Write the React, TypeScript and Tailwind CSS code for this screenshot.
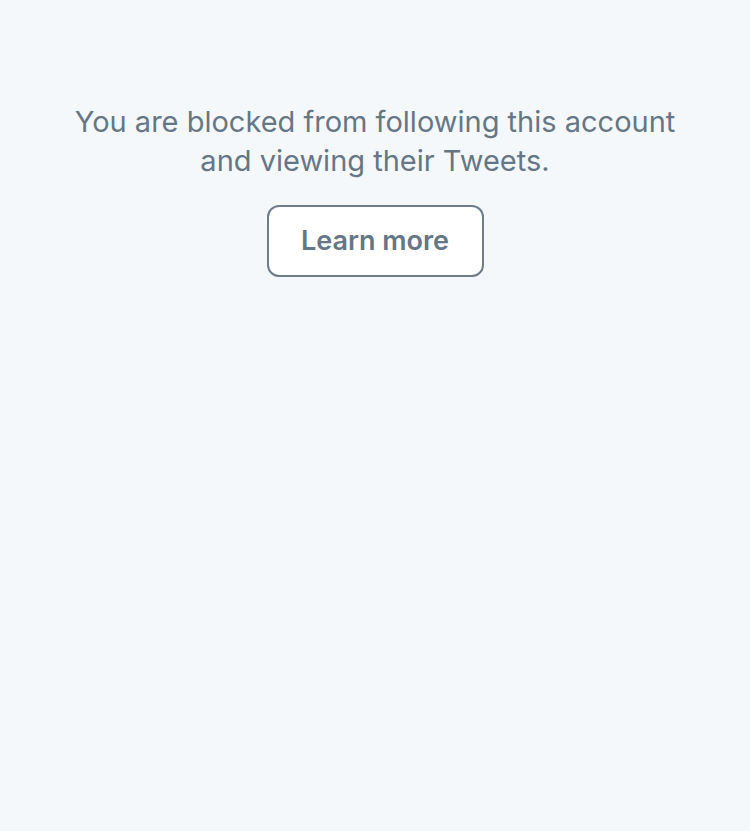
export default function App() {
  return (
    <div
      className="min-h-[831px] w-full bg-[#f5f8fa] flex flex-col items-center pt-[102px]"
      style={{ fontFamily: 'Inter, Roboto, "Noto Sans", sans-serif' }}
    >
      <p className="text-[29px] leading-[39px] text-[#657786] text-center">
        You are blocked from following this account
        <br />
        and viewing their Tweets.
      </p>
      <button className="mt-[25px] w-[217px] h-[72px] rounded-[12px] border-2 border-[#6e7c8b] bg-white text-[27px] font-semibold text-[#657786]">
        Learn more
      </button>
    </div>
  );
}
